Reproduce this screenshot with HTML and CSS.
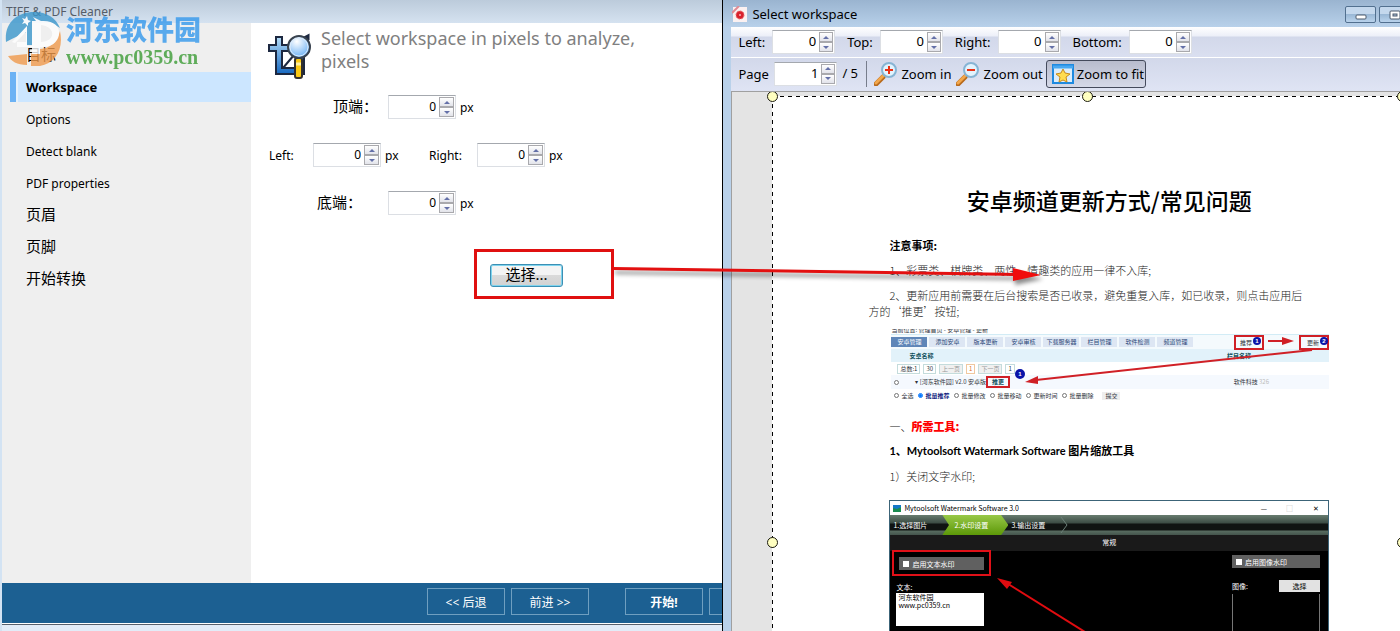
FILE: index.html
```
<!doctype html>
<html lang="zh-CN">
    <head>
        <meta charset="utf-8">
        <title>TIFF &amp; PDF Cleaner</title>
        <link rel="stylesheet" href="styles.css">
    </head>
    <body>
        <div class="desktop">
            <section class="win cleaner">
                <header class="caption">TIFF &amp; PDF Cleaner</header>
                <div class="wizard">
                    <nav class="steps">
                        <a class="cn" href="#target">目标</a>
                        <a class="current" href="#workspace">Workspace</a>
                        <a href="#options">Options</a>
                        <a href="#blank">Detect blank</a>
                        <a href="#pdf">PDF properties</a>
                        <a class="cn" href="#header">页眉</a>
                        <a class="cn" href="#footer">页脚</a>
                        <a class="cn" href="#convert">开始转换</a>
                    </nav>
                    <main class="panel">
                        <div class="intro">
                            <svg width="48" height="52" viewBox="0 0 48 52">
                                <defs>
                                    <linearGradient id="crop" x1="0" y1="0" x2="0" y2="1">
                                        <stop offset="0" stop-color="#b4dcf8"/>
                                        <stop offset="1" stop-color="#1668c0"/>
                                    </linearGradient>
                                    <radialGradient id="lens" cx="40%" cy="25%" r="75%">
                                        <stop offset="0" stop-color="#fff"/>
                                        <stop offset="1" stop-color="#6ab0f4"/>
                                    </radialGradient>
                                </defs>
                                <path d="M9 7h6v8h15v6H15v17h22v6H9V21H2v-6h7z" fill="url(#crop)" stroke="#1c2840" stroke-width="2"/>
                                <path d="M31 20h6v18h-6zM16 38l11-13" fill="#2c80cc" stroke="#1c2840" stroke-width="2"/>
                                <path d="m37 8 4-2v4" fill="none" stroke="#1c2840" stroke-width="3"/>
                                <rect x="28" y="28" width="7" height="20" rx="2" fill="#fbc913" stroke="#33302c" stroke-width="2"/>
                                <path d="M29 34h5" stroke="#fff0a0" stroke-width="3"/>
                                <circle cx="32" cy="17" r="11" fill="url(#lens)" stroke="#38424e" stroke-width="2"/>
                                <circle cx="32" cy="17" r="9" fill="none" stroke="#dcebfa" stroke-width="1"/>
                            </svg>
                            <h1>Select workspace in pixels to analyze, pixels</h1>
                        </div>
                        <div class="margins">
                            <div class="line top">
                                <label class="cn" for="mTop">顶端：</label>
                                <span class="spin"><input id="mTop" type="text" value="0"><span class="arrows"><button type="button" aria-label="up"></button><button type="button" aria-label="down"></button></span></span>
                                <span class="unit">px</span>
                            </div>
                            <div class="line middle">
                                <label for="mLeft">Left:</label>
                                <span class="spin"><input id="mLeft" type="text" value="0"><span class="arrows"><button type="button" aria-label="up"></button><button type="button" aria-label="down"></button></span></span>
                                <span class="unit">px</span>
                                <label class="right" for="mRight">Right:</label>
                                <span class="spin"><input id="mRight" type="text" value="0"><span class="arrows"><button type="button" aria-label="up"></button><button type="button" aria-label="down"></button></span></span>
                                <span class="unit">px</span>
                            </div>
                            <div class="line bottom">
                                <label class="cn" for="mBottom">底端：</label>
                                <span class="spin"><input id="mBottom" type="text" value="0"><span class="arrows"><button type="button" aria-label="up"></button><button type="button" aria-label="down"></button></span></span>
                                <span class="unit">px</span>
                            </div>
                        </div>
                        <div class="marked">
                            <button class="choose" type="button">选择...</button>
                        </div>
                    </main>
                </div>
                <footer class="actions">
                    <button type="button">&lt;&lt; 后退</button>
                    <button type="button">前进 &gt;&gt;</button>
                    <button class="start" type="button">开始!</button>
                    <button type="button" aria-label="more"></button>
                </footer>
                <div class="edge"></div>
            </section>

            <section class="win workspace">
                <header class="caption">
                    <svg width="16" height="16" viewBox="0 0 16 16">
                        <rect x="1" y="1" width="14" height="15" fill="#fbf1f1"/>
                        <path d="M0 7 7 0" stroke="#e08a94" stroke-width="2"/>
                        <circle cx="8" cy="9" r="4" fill="#d8202c" stroke="#e86a70" stroke-dasharray="2 1"/>
                        <circle cx="8" cy="9" r="1" fill="#f6b4b8"/>
                    </svg>
                    <span>Select workspace</span>
                    <div class="sys">
                        <button type="button" aria-label="minimize"><svg width="12" height="12" viewBox="0 0 12 12"><rect x="1" y="6" width="10" height="4" rx="1" fill="#fff" stroke="#4c5a6c"/></svg></button>
                        <button type="button" aria-label="maximize"><svg width="12" height="12" viewBox="0 0 12 12"><rect x="1" y="2" width="10" height="8" rx="1" fill="#fff" stroke="#4c5a6c"/><rect x="4" y="5" width="4" height="2" fill="#a9c0da" stroke="#4c5a6c"/></svg></button>
                    </div>
                </header>
                <div class="bar values">
                    <label for="wLeft">Left:</label>
                    <span class="spin"><input id="wLeft" type="text" value="0"><span class="arrows"><button type="button" aria-label="up"></button><button type="button" aria-label="down"></button></span></span>
                    <label for="wTop">Top:</label>
                    <span class="spin"><input id="wTop" type="text" value="0"><span class="arrows"><button type="button" aria-label="up"></button><button type="button" aria-label="down"></button></span></span>
                    <label for="wRight">Right:</label>
                    <span class="spin"><input id="wRight" type="text" value="0"><span class="arrows"><button type="button" aria-label="up"></button><button type="button" aria-label="down"></button></span></span>
                    <label for="wBottom">Bottom:</label>
                    <span class="spin"><input id="wBottom" type="text" value="0"><span class="arrows"><button type="button" aria-label="up"></button><button type="button" aria-label="down"></button></span></span>
                </div>
                <div class="bar view">
                    <label for="page">Page</label>
                    <span class="spin"><input id="page" type="text" value="1"><span class="arrows"><button type="button" aria-label="up"></button><button type="button" aria-label="down"></button></span></span>
                    <span class="total">/ 5</span>
                    <button class="tool" type="button">
                        <svg width="24" height="24" viewBox="0 0 24 24"><path d="m2 22 7-7" stroke="#b86a1c" stroke-width="5" stroke-linecap="round"/><path d="m2 21 7-7" stroke="#f2a74c" stroke-width="3" stroke-linecap="round"/><circle cx="15" cy="8" r="7" fill="#e2f3fd" stroke="#86b4d4" stroke-width="2"/><path d="M11 8h8M15 4v8" stroke="#ea3014" stroke-width="2"/></svg>
                        Zoom in
                    </button>
                    <button class="tool" type="button">
                        <svg width="24" height="24" viewBox="0 0 24 24"><path d="m2 22 7-7" stroke="#b86a1c" stroke-width="5" stroke-linecap="round"/><path d="m2 21 7-7" stroke="#f2a74c" stroke-width="3" stroke-linecap="round"/><circle cx="15" cy="8" r="7" fill="#e2f3fd" stroke="#86b4d4" stroke-width="2"/><path d="M11 8h8" stroke="#ea3014" stroke-width="2"/></svg>
                        Zoom out
                    </button>
                    <button class="tool pressed" type="button">
                        <svg width="22" height="20" viewBox="0 0 22 20"><rect x="1" y="1" width="20" height="18" fill="#dcedfb" stroke="#1e8ae0" stroke-width="2"/><path d="M1 3h20" stroke="#48a8f0" stroke-width="3"/><path d="m11 5 2 4 5 1-4 3 1 5-4-2-4 2 1-5-4-3 5-1z" fill="#ffdc50" stroke="#c88a1c"/></svg>
                        Zoom to fit
                    </button>
                </div>
                <div class="canvas">
                    <article class="sheet">
                        <i class="knob tl"></i><i class="knob tc"></i><i class="knob tr"></i><i class="knob ml"></i><i class="knob mr"></i>
                        <h2>安卓频道更新方式/常见问题</h2>
                        <h3>注意事项:</h3>
                        <p class="rule">1、彩票类、棋牌类、两性、情趣类的应用一律不入库;</p>
                        <p class="rule wrap">2、更新应用前需要在后台搜索是否已收录，避免重复入库，如已收录，则点击应用后<br>方的‘推更’按钮;</p>
                        <div class="admin">
                            <div class="crumb">当前位置: 管理首页 - 安卓管理 - 更新</div>
                            <div class="tabs">
                                <a class="on" href="#a1">安卓管理</a>
                                <a href="#a2">添加安卓</a>
                                <a href="#a3">版本更新</a>
                                <a href="#a4">安卓审核</a>
                                <a href="#a5">下载服务器</a>
                                <a href="#a6">栏目管理</a>
                                <a href="#a7">软件检测</a>
                                <a href="#a8">频道管理</a>
                                <span class="hit">推荐</span>
                                <span class="hit last">更新</span>
                            </div>
                            <div class="cols"><b>安卓名称</b><b>栏目名称</b></div>
                            <div class="pager"><span>总数:1</span><span>30</span><span class="off">上一页</span><span class="cur">1</span><span class="off">下一页</span><span>1</span></div>
                            <div class="entry"><input type="checkbox" aria-label="row"><span>▾ [河东软件园] v2.0 安卓版</span><b class="push">推更</b><span class="kind">软件科技 <em>326</em></span></div>
                            <div class="checks">
                                <label><input type="checkbox">全选</label>
                                <label class="sel"><input type="radio" name="op" checked>批量推荐</label>
                                <label><input type="radio" name="op">批量修改</label>
                                <label><input type="radio" name="op">批量移动</label>
                                <label><input type="radio" name="op">更新时间</label>
                                <label><input type="radio" name="op">批量删除</label>
                                <button type="button">提交</button>
                            </div>
                            <svg class="notes" width="440" height="80" viewBox="0 0 440 80">
                                <g stroke="#d02026" fill="#d02026">
                                    <path d="M377 13h16" stroke-width="2"/>
                                    <path d="m403 13-12-4v8z" stroke="none"/>
                                    <path d="M421 22 145 52" stroke-width="2"/>
                                    <path d="m134 54 13-6v8z" stroke="none"/>
                                </g>
                                <g fill="#0a14a8">
                                    <circle cx="366" cy="13" r="4"/>
                                    <circle cx="433" cy="13" r="4"/>
                                    <circle cx="129" cy="46" r="5"/>
                                </g>
                                <g class="num">
                                    <text x="366" y="15">1</text>
                                    <text x="433" y="15">2</text>
                                    <text x="129" y="48">1</text>
                                </g>
                            </svg>
                        </div>
                        <p class="tools">一、<b>所需工具:</b></p>
                        <p class="item strong">1、Mytoolsoft Watermark Software 图片缩放工具</p>
                        <p class="item">1）关闭文字水印;</p>
                        <div class="mark">
                            <div class="mark-title">
                                <svg width="8" height="7" viewBox="0 0 8 7"><rect width="8" height="7" fill="#1478c8"/><path d="M0 7V3l4 1 4-2v5z" fill="#1a8c50"/></svg>
                                <span>Mytoolsoft Watermark Software 3.0</span>
                                <span class="x">—</span><span class="x dim">□</span><span class="x">✕</span>
                            </div>
                            <div class="mark-steps">
                                <span>1.选择图片</span>
                                <span class="on">2.水印设置</span>
                                <span>3.输出设置</span>
                                <svg width="8" height="16" viewBox="0 0 8 16"><path d="m1 0 6 8-6 8" fill="none" stroke="#6c8078"/></svg>
                            </div>
                            <div class="mark-sub">常规</div>
                            <div class="mark-body">
                                <div class="side">
                                    <div class="ring"><label><input type="checkbox">启用文本水印</label></div>
                                    <label class="name" for="mk">文本:</label>
                                    <textarea id="mk">河东软件园
www.pc0359.cn</textarea>
                                </div>
                                <svg class="pointer" width="90" height="54" viewBox="0 0 90 54"><path d="m8 4 80 50" stroke="#e00c10" stroke-width="2"/><path d="m0 0 15 4-5 7z" fill="#e00c10"/></svg>
                                <div class="side pic">
                                    <label class="flag"><input type="checkbox">启用图像水印</label>
                                    <div class="pick"><span>图像:</span><button type="button">选择</button></div>
                                    <div class="preview"></div>
                                </div>
                            </div>
                        </div>
                    </article>
                </div>
            </section>

            <svg class="callout" width="436" height="30" viewBox="0 0 436 30">
                <path d="m0 6 406 6v3L0 9z" fill="#e31010"/>
                <path d="m400 7 28 7-28 6z" fill="#f00c0c"/>
            </svg>

            <div class="brand">
                <svg width="58" height="56" viewBox="0 0 58 56">
                    <path d="M1 31C-1 12 12 1 29 1c13 0 22 6 26 16-6-5-13-6-20-5v22H22V21c-7 3-14 6-21 10z" fill="#3b97cc"/>
                    <path d="M3 45 22 43v11C12 54 6 50 3 45zM28 38h7c10-1 17-6 20-18 4 19-5 32-20 35h-9V44z" fill="#f09a4c"/>
                    <path d="M7 31 22 15v20h5V10h4l-3-4 8 4c12-1 19 5 18 13-1 9-8 13-19 13v7h-8v-7H12v-5h9V21L10 32zM36 14v17c14 0 16-15 0-17z" fill="#fff"/>
                    <path d="m17 7 3 1 2-3 1 4 3 1-3 2v3l-3-3-3 1 2-3z" fill="#fff"/>
                </svg>
                <div>
                    <strong>河东软件园</strong>
                    <span>www.pc0359.cn</span>
                </div>
            </div>
        </div>
    </body>
</html>
```
FILE: styles.css
```
* {
    box-sizing: border-box;
}
html,
body {
    margin: 0;
    padding: 0;
    height: 100%;
    overflow: hidden;
}
body {
    font-family: "Noto Sans", "Noto Sans CJK SC", sans-serif;
    font-size: 12px;
    color: #000;
}
button,
input,
textarea {
    font: inherit;
    color: inherit;
    margin: 0;
    padding: 0;
}
a {
    color: inherit;
    text-decoration: none;
}
svg {
    flex-shrink: 0;
    display: block;
}
.desktop {
    position: relative;
    display: flex;
    height: 100vh;
    overflow: hidden;
}
.win {
    display: flex;
    flex-direction: column;
    min-width: 0;
    overflow: hidden;
}

/* left window */
.cleaner {
    flex: 0 0 51.6%;
    border-left: 2px solid #d3e3f3;
}
.cleaner .caption {
    height: 23px;
    line-height: 23px;
    padding-left: 4px;
    color: #555d68;
    background: linear-gradient(#bccbdb, #d5e2f0);
}
.wizard {
    flex: 1;
    min-height: 0;
    display: flex;
    background-color: #fff;
}
.steps {
    width: 249px;
    flex-shrink: 0;
    padding: 17px 0 0 8px;
    background-color: #efefef;
}
.steps a {
    display: block;
    height: 30px;
    line-height: 31px;
    margin-bottom: 2px;
    padding-left: 16px;
}
.steps a.cn {
    line-height: 27px;
}
.steps a.current {
    padding-left: 10px;
    font-weight: bold;
    font-size: 13px;
    background-color: #cce6ff;
    border-left: 6px solid #6cb2f4;
    box-shadow: inset 2px 0 #e4f1fc;
}
.cn {
    font-family: "Noto Sans CJK SC", sans-serif;
    font-size: 15px;
}
.panel {
    flex: 1;
    min-width: 0;
}
.intro {
    display: flex;
    gap: 6px;
    padding: 4px 60px 0 16px;
    height: 72px;
}
.intro svg {
    margin-top: 3px;
}
.intro h1 {
    margin: 0;
    font-size: 18px;
    line-height: 23px;
    font-weight: normal;
    color: #808080;
}
.margins {
    display: flex;
    flex-direction: column;
    gap: 24px;
}
.line {
    display: flex;
    align-items: center;
    height: 24px;
}
.line label {
    width: 44px;
}
.line label.cn {
    line-height: 20px;
    padding-bottom: 2px;
}
.line.top {
    padding-left: 82px;
}
.line.top label {
    width: 55px;
}
.line.middle {
    padding-left: 18px;
}
.line label.right {
    width: 48px;
    margin-left: 4px;
}
.line.bottom {
    padding-left: 66px;
}
.line.bottom label {
    width: 71px;
}
.unit {
    width: 44px;
    padding-left: 4px;
}
.spin {
    display: flex;
    width: 68px;
    height: 24px;
    padding: 1px;
    background-color: #fff;
    border: 1px solid #dcdfe4;
    border-top-color: #a4a8ae;
}
.spin input {
    flex: 1;
    min-width: 0;
    border: 0;
    padding: 0 3px 2px 0;
    text-align: right;
    background: none;
    outline: none;
}
.arrows {
    display: flex;
    flex-direction: column;
    width: 15px;
}
.arrows button {
    flex: 1;
    display: flex;
    align-items: center;
    justify-content: center;
    border: 1px solid #a9a9ad;
    background: linear-gradient(#fff, #e2e3ea);
}
.arrows button::before {
    content: "";
    border: 3px solid transparent;
    border-top-width: 0;
    border-bottom-color: #6470a8;
}
.arrows button + button::before {
    border-top: 3px solid #6470a8;
    border-bottom: 0;
}
.marked {
    width: 140px;
    height: 50px;
    margin: 34px 0 0 223px;
    padding: 12px 13px;
    border: 3px solid #e01010;
}
.choose {
    display: block;
    width: 73px;
    height: 23px;
    font-size: 15px;
    line-height: 17px;
    padding-bottom: 2px;
    border: 1px solid #3c8fb4;
    border-radius: 3px;
    box-shadow: inset 0 0 0 1px #7fd4ee;
    background: linear-gradient(#f4f4f4 50%, #dadada 50%, #d2d2d2);
}
.actions {
    display: flex;
    align-items: flex-start;
    gap: 6px;
    height: 40px;
    padding: 5px 0 0 425px;
    background-color: #1c6092;
}
.actions button {
    flex-shrink: 0;
    width: 78px;
    height: 27px;
    color: #fff;
    background: none;
    border: 1px solid #6f9fc0;
}
.actions .start {
    margin-left: 30px;
    font-weight: bold;
}
.edge {
    height: 8px;
    border-top: 1px solid #fff;
    background: linear-gradient(#58606c 1px, #e2ecf8 1px);
}

/* right window */
.workspace {
    flex: 1;
    font-size: 13px;
    border-left: 1px solid #000;
    background-color: #b9d1ea;
    padding-left: 8px;
}
.workspace .caption {
    display: flex;
    align-items: center;
    gap: 4px;
    height: 27px;
    margin-left: -8px;
    padding: 0 0 0 9px;
    background: linear-gradient(#9ab4d0, #b8d1ea);
}
.sys {
    display: flex;
    gap: 3px;
    margin: 2px -10px 0 auto;
}
.sys button {
    width: 31px;
    height: 17px;
    display: flex;
    align-items: center;
    justify-content: center;
    border: 1px solid #52708f;
    border-radius: 2px;
    background: linear-gradient(#c4d8ed 50%, #9ab8d6 50%, #b9d3ec);
}
.bar {
    display: flex;
    align-items: center;
    flex-shrink: 0;
    padding-left: 7px;
}
.bar .spin {
    width: 63px;
}
.bar .arrows {
    width: 14px;
}
.values {
    height: 31px;
    background: linear-gradient(#fff, #eceff8 9px, #d2d8ea 10px, #dadff0);
    border-bottom: 1px solid #fff;
}
.values label {
    padding-right: 7px;
}
.values .spin {
    margin-right: 12px;
}
.view {
    height: 33px;
    padding-bottom: 2px;
    background: linear-gradient(#d2d8ea, #dfe4f4);
}
.view label {
    width: 36px;
}
.total {
    width: 30px;
    height: 26px;
    line-height: 24px;
    padding-left: 5px;
    margin-right: 7px;
    border-right: 1px solid #777d8c;
}
.tool {
    display: flex;
    align-items: center;
    gap: 3px;
    height: 28px;
    margin-right: 5px;
    white-space: nowrap;
    border: 0;
    background: none;
}
.tool.pressed {
    margin-left: -2px;
    padding: 0 1px 0 5px;
    border: 1px solid #444a5c;
    border-radius: 3px;
    background: linear-gradient(#b8bccd, #d5d9e8);
}
.canvas {
    flex: 1;
    min-height: 0;
    overflow: hidden;
    padding: 4px 0 0 40px;
    border-top: 1px solid #a0a0a0;
    border-left: 1px solid #a0a0a0;
    background-color: #e4e4e4;
}

/* page preview */
.sheet {
    position: relative;
    min-height: 892px;
    margin-right: -2px;
    padding: 90px 73px 0 96px;
    background:
        repeating-linear-gradient(90deg, #000 0 4px, #fff 4px 8px) 0 0 / 100% 1px no-repeat,
        repeating-linear-gradient(#000 0 4px, #fff 4px 8px) 0 0 / 1px 100% no-repeat,
        #fff;
    font-family: "Noto Sans CJK SC", sans-serif;
    font-size: 11px;
    color: #222;
}
.knob {
    position: absolute;
    width: 11px;
    height: 11px;
    margin: -5px;
    border: 1px solid #1c1c10;
    border-radius: 50%;
    background-color: #ffffc0;
}
.tl { left: 0; top: 0; }
.tc { left: 50%; top: 0; }
.tr { left: 100%; top: 0; }
.ml { left: 0; top: 50%; }
.mr { left: 100%; top: 50%; }
.sheet h2 {
    margin: 0;
    padding-left: 21px;
    text-align: center;
    font-size: 23px;
    line-height: 28px;
    font-weight: 500;
    color: #000;
    white-space: nowrap;
}
.sheet h3 {
    margin: 22px 0 0 21px;
    font-size: 11px;
    line-height: 18px;
    color: #000;
}
.sheet p {
    margin: 0;
    line-height: 16px;
    white-space: nowrap;
    font-weight: 300;
}
.sheet .rule {
    margin-top: 8px;
    text-indent: 21px;
}
.sheet .wrap {
    margin-top: 9px;
}
.admin {
    position: relative;
    height: 80px;
    margin: 9px 0 0 23px;
    padding-top: 1px;
    font-size: 6px;
    line-height: 8px;
    color: #30343c;
}
.admin a,
.admin span,
.admin b,
.admin label {
    white-space: nowrap;
}
.crumb {
    height: 6px;
    line-height: 2px;
    overflow: hidden;
    border-bottom: 1px solid #d2ecf6;
}
.tabs {
    display: flex;
    align-items: center;
    gap: 2px;
    height: 14px;
    background-color: #f4fafd;
}
.tabs a {
    width: 36px;
    line-height: 10px;
    text-align: center;
    color: #2c4878;
    background-color: #dde6f3;
}
.tabs a.on {
    color: #fff;
    background-color: #5f86b8;
}
.hit {
    width: 30px;
    height: 15px;
    line-height: 12px;
    margin-left: auto;
    padding-left: 4px;
    border: 2px solid #d02026;
}
.hit.last {
    margin-left: 33px;
    padding-left: 6px;
}
.cols {
    display: flex;
    justify-content: space-between;
    height: 13px;
    line-height: 13px;
    padding: 0 78px 0 18px;
    color: #10505c;
    background-color: #e2f2fa;
}
.pager {
    display: flex;
    align-items: center;
    gap: 3px;
    height: 13px;
    padding-left: 6px;
}
.pager span {
    padding: 0 2px;
    border: 1px solid #c4dcdc;
}
.pager .off {
    color: #999;
    background-color: #f0f0f0;
}
.pager .cur {
    color: #e07030;
    border-color: #f0c8a0;
}
.entry {
    display: flex;
    align-items: center;
    gap: 14px;
    height: 14px;
    padding-left: 3px;
    background-color: #f5f9fe;
}
.entry .push {
    width: 24px;
    margin-left: -14px;
    padding-left: 4px;
    color: #10505c;
    border: 2px solid #d02026;
}
.kind {
    margin: 0 60px 0 auto;
}
.kind em {
    font-style: normal;
    color: #bbb;
}
.admin input {
    width: 5px;
    height: 5px;
    flex-shrink: 0;
    margin-right: 2px;
}
.checks {
    display: flex;
    align-items: center;
    gap: 5px;
    height: 13px;
    padding-left: 3px;
}
.checks label {
    display: flex;
    align-items: center;
}
.checks .sel {
    font-weight: bold;
    color: #101c80;
}
.checks button {
    width: 18px;
    margin-left: 4px;
    border: 0;
    background-color: #eee;
}
.notes {
    position: absolute;
    left: 0;
    top: 0;
}
.num {
    font: bold 6px "Liberation Sans", sans-serif;
    fill: #fff;
    text-anchor: middle;
}
.sheet .tools {
    margin: 10px 0 0 21px;
}
.sheet .tools b {
    font-weight: 900;
    color: #f00;
}
.sheet .item {
    margin: 9px 0 0 21px;
}
.sheet .strong {
    font-family: Lato, "Noto Sans CJK SC", sans-serif;
    font-weight: bold;
    color: #000;
}
.mark {
    margin: 16px 0 0 21px;
    font-size: 7px;
    color: #fff;
    background-color: #000;
    border: 1px solid #3c6478;
    border-bottom: 0;
}
.mark-title {
    display: flex;
    align-items: center;
    gap: 3px;
    height: 14px;
    padding: 0 9px 0 3px;
    color: #000;
    background-color: #fff;
}
.mark-title .x {
    width: 23px;
    text-align: right;
}
.mark-title .x:nth-of-type(2) {
    margin-left: auto;
}
.mark-title .dim {
    color: #bbb;
}
.mark-steps {
    display: flex;
    height: 20px;
    line-height: 20px;
    background: linear-gradient(#687c70, #3c4c44 8px, #101412 9px, #101412 15px, #586c60 16px, #44544c);
}
.mark-steps span {
    width: 52px;
    padding-left: 3px;
}
.mark-steps .on {
    width: 66px;
    padding-left: 12px;
    background: linear-gradient(#98c848, #5c9808);
    clip-path: polygon(0 0, 89% 0, 100% 50%, 89% 100%, 0 100%, 10% 50%);
}
.mark-steps svg {
    margin-top: 2px;
}
.mark-sub {
    height: 16px;
    line-height: 14px;
    text-align: center;
    background-color: #1a1a1a;
}
.mark-body {
    display: flex;
    height: 260px;
}
.side {
    width: 99px;
    padding-left: 2px;
}
.ring {
    height: 26px;
    margin: -1px -2px 0 0;
    padding: 5px;
    border: 2px solid #e01018;
}
.ring label,
.flag {
    display: flex;
    align-items: center;
    gap: 3px;
    height: 13px;
    padding-left: 4px;
    background-color: #606060;
}
.mark input {
    appearance: none;
    width: 6px;
    height: 6px;
    background-color: #fff;
}
.name {
    display: block;
    height: 11px;
    line-height: 11px;
    margin: 6px 0 0 4px;
}
.side textarea {
    display: block;
    width: 88px;
    height: 33px;
    margin-left: 4px;
    padding-left: 2px;
    color: #000;
    line-height: 8px;
    border: 0;
    resize: none;
    overflow: hidden;
    background-color: #fff;
}
.pointer {
    margin: 27px 0 0 8px;
}
.pic {
    width: 96px;
    margin-left: auto;
    padding: 4px 8px 0 0;
}
.pick {
    display: flex;
    justify-content: space-between;
    align-items: center;
    height: 12px;
    margin-top: 12px;
}
.pick button {
    width: 41px;
    height: 12px;
    color: #000;
    border: 0;
    background-color: #e2e2e2;
}
.preview {
    height: 200px;
    margin-top: 2px;
    border: 1px solid #777;
    border-width: 0 1px;
}

/* overlays */
.callout {
    position: absolute;
    left: 613px;
    top: 261px;
    filter: drop-shadow(2px 4px 2px rgba(0, 0, 0, .45));
}
.brand {
    position: absolute;
    left: 5px;
    top: 11px;
    display: flex;
    gap: 3px;
    opacity: .8;
    pointer-events: none;
}
.brand strong {
    display: block;
    font-family: "Noto Sans CJK SC", sans-serif;
    font-size: 27px;
    line-height: 36px;
    font-weight: 900;
    color: #3398ec;
}
.brand span {
    display: block;
    font-family: "Liberation Serif", serif;
    font-size: 20px;
    line-height: 20px;
    font-weight: bold;
    color: #3c9c36;
}
```
